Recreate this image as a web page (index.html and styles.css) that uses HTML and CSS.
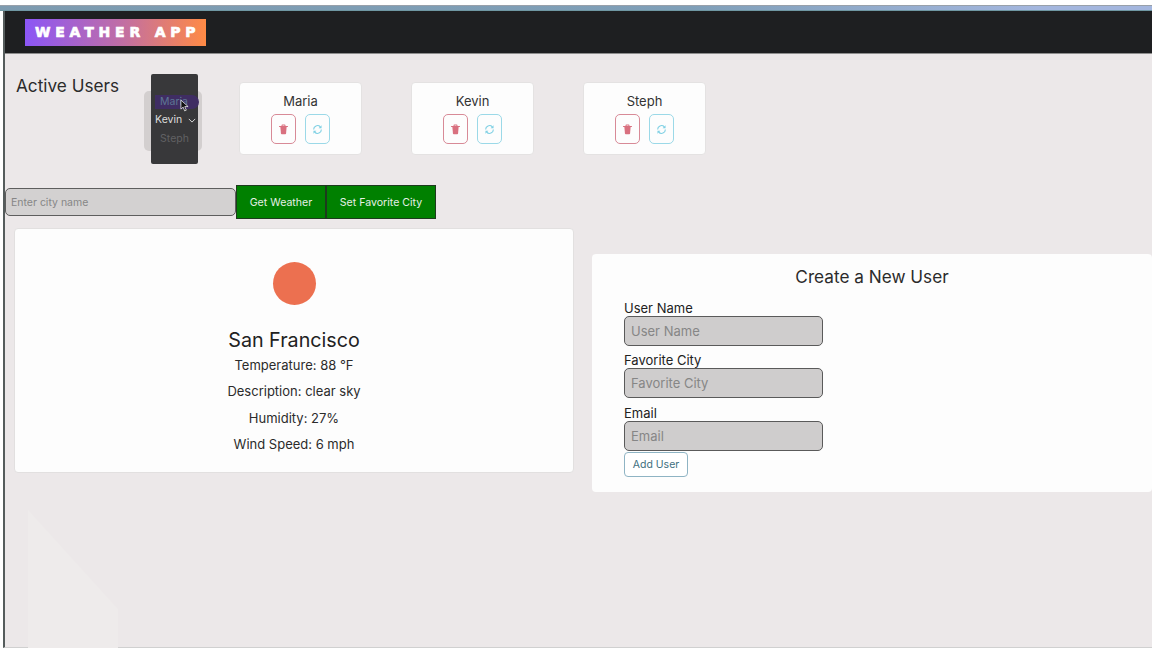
FILE: index.html
```html
<!DOCTYPE html>
<html lang="en">
<head>
<meta charset="utf-8">
<title>Weather App</title>
<link rel="stylesheet" href="styles.css">
</head>
<body>
<div class="topline"></div>
<div class="page">
  <div class="ghost-shape"></div>
  <header class="navbar"><div class="logo">WEATHER APP</div></header>
  <section class="users">
    <h2 class="users-title">Active Users</h2>
    <div class="select-slot">
      <div class="select-ghost"></div>
      <div class="select-menu">
        <div class="opt opt-hover">Maria</div>
        <div class="opt opt-current">Kevin<svg class="chev" viewBox="0 0 10 6"><path d="M1 1l4 4 4-4" fill="none" stroke="#ddd" stroke-width="1.2"/></svg></div>
        <div class="opt opt-dim">Steph</div>
        <svg class="cursor" viewBox="0 0 10 14"><path d="M1 1v10l2.5-2.2L5.2 13l1.8-.8-1.7-4H9z" fill="#111" stroke="#fff" stroke-width=".8"/></svg>
      </div>
    </div>
    <div class="user-cards">
      <article class="user-card">
        <div class="user-name">Maria</div>
        <div class="user-actions">
          <button class="icon-btn del"><svg viewBox="0 0 12 12"><path d="M4.4 2.4V1.4q0-.4.4-.4h2.4q.4 0 .4.4v1M1.6 2.8h8.8" fill="none" stroke="#d9707f" stroke-width="1.1" stroke-linecap="round"/><path d="M2.6 3.4h6.8l-.6 7q-.1.8-.9.8H4.1q-.8 0-.9-.8z" fill="#d9707f"/></svg></button>
          <button class="icon-btn sync"><svg viewBox="0 0 12 12"><path d="M1.8 6a4.2 4.2 0 0 1 7.2-3M10.2 6a4.2 4.2 0 0 1-7.2 3" fill="none" stroke="#7fd0e4" stroke-width="1.2"/><path d="M10.4 1.4v3.2H7.2zM1.6 10.6V7.4h3.2z" fill="#7fd0e4"/></svg></button>
        </div>
      </article>
      <article class="user-card">
        <div class="user-name">Kevin</div>
        <div class="user-actions">
          <button class="icon-btn del"><svg viewBox="0 0 12 12"><path d="M4.4 2.4V1.4q0-.4.4-.4h2.4q.4 0 .4.4v1M1.6 2.8h8.8" fill="none" stroke="#d9707f" stroke-width="1.1" stroke-linecap="round"/><path d="M2.6 3.4h6.8l-.6 7q-.1.8-.9.8H4.1q-.8 0-.9-.8z" fill="#d9707f"/></svg></button>
          <button class="icon-btn sync"><svg viewBox="0 0 12 12"><path d="M1.8 6a4.2 4.2 0 0 1 7.2-3M10.2 6a4.2 4.2 0 0 1-7.2 3" fill="none" stroke="#7fd0e4" stroke-width="1.2"/><path d="M10.4 1.4v3.2H7.2zM1.6 10.6V7.4h3.2z" fill="#7fd0e4"/></svg></button>
        </div>
      </article>
      <article class="user-card">
        <div class="user-name">Steph</div>
        <div class="user-actions">
          <button class="icon-btn del"><svg viewBox="0 0 12 12"><path d="M4.4 2.4V1.4q0-.4.4-.4h2.4q.4 0 .4.4v1M1.6 2.8h8.8" fill="none" stroke="#d9707f" stroke-width="1.1" stroke-linecap="round"/><path d="M2.6 3.4h6.8l-.6 7q-.1.8-.9.8H4.1q-.8 0-.9-.8z" fill="#d9707f"/></svg></button>
          <button class="icon-btn sync"><svg viewBox="0 0 12 12"><path d="M1.8 6a4.2 4.2 0 0 1 7.2-3M10.2 6a4.2 4.2 0 0 1-7.2 3" fill="none" stroke="#7fd0e4" stroke-width="1.2"/><path d="M10.4 1.4v3.2H7.2zM1.6 10.6V7.4h3.2z" fill="#7fd0e4"/></svg></button>
        </div>
      </article>
    </div>
  </section>
  <section class="search">
    <input class="city-input" placeholder="Enter city name">
    <button class="green-btn btn-get">Get Weather</button>
    <button class="green-btn btn-fav">Set Favorite City</button>
  </section>
  <section class="panels">
    <article class="weather-card">
      <div class="sun"></div>
      <h3 class="city">San Francisco</h3>
      <p class="stat">Temperature: 88 °F</p>
      <p class="stat">Description: clear sky</p>
      <p class="stat">Humidity: 27%</p>
      <p class="stat">Wind Speed: 6 mph</p>
    </article>
    <article class="new-user-card">
      <h3 class="form-title">Create a New User</h3>
      <form class="form">
        <label class="field-label">User Name</label>
        <input class="field" placeholder="User Name">
        <label class="field-label">Favorite City</label>
        <input class="field" placeholder="Favorite City">
        <label class="field-label">Email</label>
        <input class="field" placeholder="Email">
        <button type="button" class="add-btn">Add User</button>
      </form>
    </article>
  </section>
</div>
</body>
</html>
```
FILE: styles.css
```css
* { box-sizing: border-box; }
html, body { margin: 0; height: 100%; overflow: hidden; }
body { background: #fff; font-family: Inter, "Noto Sans", sans-serif; color: #2b2b2b; display: flex; flex-direction: column; height: 648px; }
.topline { flex: none; margin-top: 5px; background: linear-gradient(90deg, #7d9bb0, #7f9fb8 60%, #a3b6de 90%); border-top: 1px solid #98a0aa; border-bottom: 1px solid #6f97a3; height: 6px; }
.page { position: relative; flex: 1; margin-left: 3px; border-left: 2px solid #555c5c; border-bottom: 1px solid #d0d0d0; background: #ece8e9; min-height: 0; }
.ghost-shape { position: absolute; left: 23px; top: 499px; width: 90px; height: 138px; background: #eeebeb; clip-path: polygon(0 0, 100% 72%, 100% 100%, 0 100%); }
.navbar { height: 43px; background: #1e1f21; padding: 8px 0 0 20px; border-bottom: 1px solid #8d8d8d; }
.logo { width: 181px; height: 27px; background: linear-gradient(90deg, #8b56f6, #c26fa2 55%, #ff8a45); color: #fff; font-family: "DejaVu Sans", sans-serif; font-weight: 700; font-size: 14px; letter-spacing: 4.8px; line-height: 27px; padding-left: 10px; white-space: nowrap; -webkit-text-stroke: .7px #fff; }
.users { position: relative; display: flex; height: 131px; align-items: flex-start; }
.users-title { margin: 20px 0 0 11px; font-size: 17.2px; font-weight: 400; line-height: 24px; width: 128px; flex: none; }
.select-slot { position: relative; width: 58px; height: 90px; margin-top: 20px; flex: none; }
.select-ghost { position: absolute; left: 0; right: 0; top: 17px; height: 60px; background: #d3cfcf; border-radius: 5px; }
.select-menu { position: absolute; left: 7px; top: 0; width: 47px; height: 90px; background: #38383a; border-radius: 2px; font-size: 10.5px; text-align: center; }
.opt { position: absolute; left: 0; right: 0; line-height: 14px; }
.opt-hover { top: 21px; color: #5d7693; background: #3f2d63; left: 4px; right: -1px; border-radius: 0 7px 7px 0; padding-right: 6px; }
.opt-current { top: 39px; color: #ddd; text-align: left; padding-left: 4px; }
.opt-dim { top: 58px; color: #616163; }
.chev { position: absolute; right: 2px; top: 5px; width: 8px; height: 5px; }
.cursor { position: absolute; left: 29px; top: 25px; width: 9px; height: 13px; }
.user-cards { display: flex; gap: 49px; margin: 28px 0 0 37px; }
.user-card { width: 123px; height: 73px; background: #fdfdfd; border: 1px solid #e4e2e2; border-radius: 4px; text-align: center; padding-top: 10px; }
.user-name { font-size: 13px; line-height: 17px; color: #333; }
.user-actions { display: flex; justify-content: center; gap: 9px; margin-top: 4px; }
.icon-btn { width: 25px; height: 30px; background: transparent; border-radius: 5px; padding: 0; display: flex; align-items: center; justify-content: center; }
.icon-btn svg { width: 11px; height: 11px; }
.del { border: 1.5px solid #d88a97; }
.sync { border: 1.5px solid #9bd9e8; }
.search { display: flex; align-items: center; height: 34px; }
.city-input { width: 231px; height: 28px; background: #d3d1d1; border: 1.5px solid #5e5e5e; border-radius: 5px; padding: 0 5px; font: 10.5px Inter, sans-serif; }
.city-input::placeholder, .field::placeholder { color: #868686; opacity: 1; }
.green-btn { height: 34px; background: #008000; color: #e6efe6; border: 1px solid #1e3a1e; font: 400 10.6px Inter, sans-serif; padding: 0; }
.btn-get { width: 90px; }
.btn-fav { width: 110px; }
.panels { display: flex; align-items: flex-start; padding-left: 9px; margin-top: 9px; }
.weather-card { width: 560px; height: 245px; background: #fdfdfd; border: 1px solid #e2e0e0; border-radius: 4px; text-align: center; padding-top: 33px; flex: none; }
.sun { width: 43px; height: 43px; border-radius: 50%; background: #ec7050; margin: 0 auto; }
.city { margin: 23px 0 0; font-size: 19.7px; font-weight: 400; line-height: 24px; color: #222; }
.stat { margin: 0; font-size: 13px; line-height: 16px; padding-top: 5px; padding-bottom: 5.3px; color: #2b2b2b; }
.new-user-card { width: 560px; height: 238px; background: #fdfdfd; border-radius: 4px; margin: 26px 0 0 18px; padding: 11px 0 0 32px; flex: none; }
.form-title { margin: 0 0 11px -32px; text-align: center; font-size: 17.2px; font-weight: 400; line-height: 24px; color: #2b2b2b; }
.form { display: flex; flex-direction: column; align-items: flex-start; }
.field-label { font-size: 13px; line-height: 16px; color: #222; }
.field { width: 199px; height: 30px; background: #cfcdcd; border: 1.5px solid #5a5a5a; border-radius: 5px; padding: 0 6px; margin-bottom: 6.3px; font: 13px Inter, sans-serif; }
.field:nth-of-type(3) { margin-bottom: 0; }
.add-btn { width: 64px; height: 25px; margin-top: 1px; background: #fff; border: 1.2px solid #8fb4c4; border-radius: 4px; color: #3e6f80; font: 400 10.5px Inter, sans-serif; padding: 0; }
```
